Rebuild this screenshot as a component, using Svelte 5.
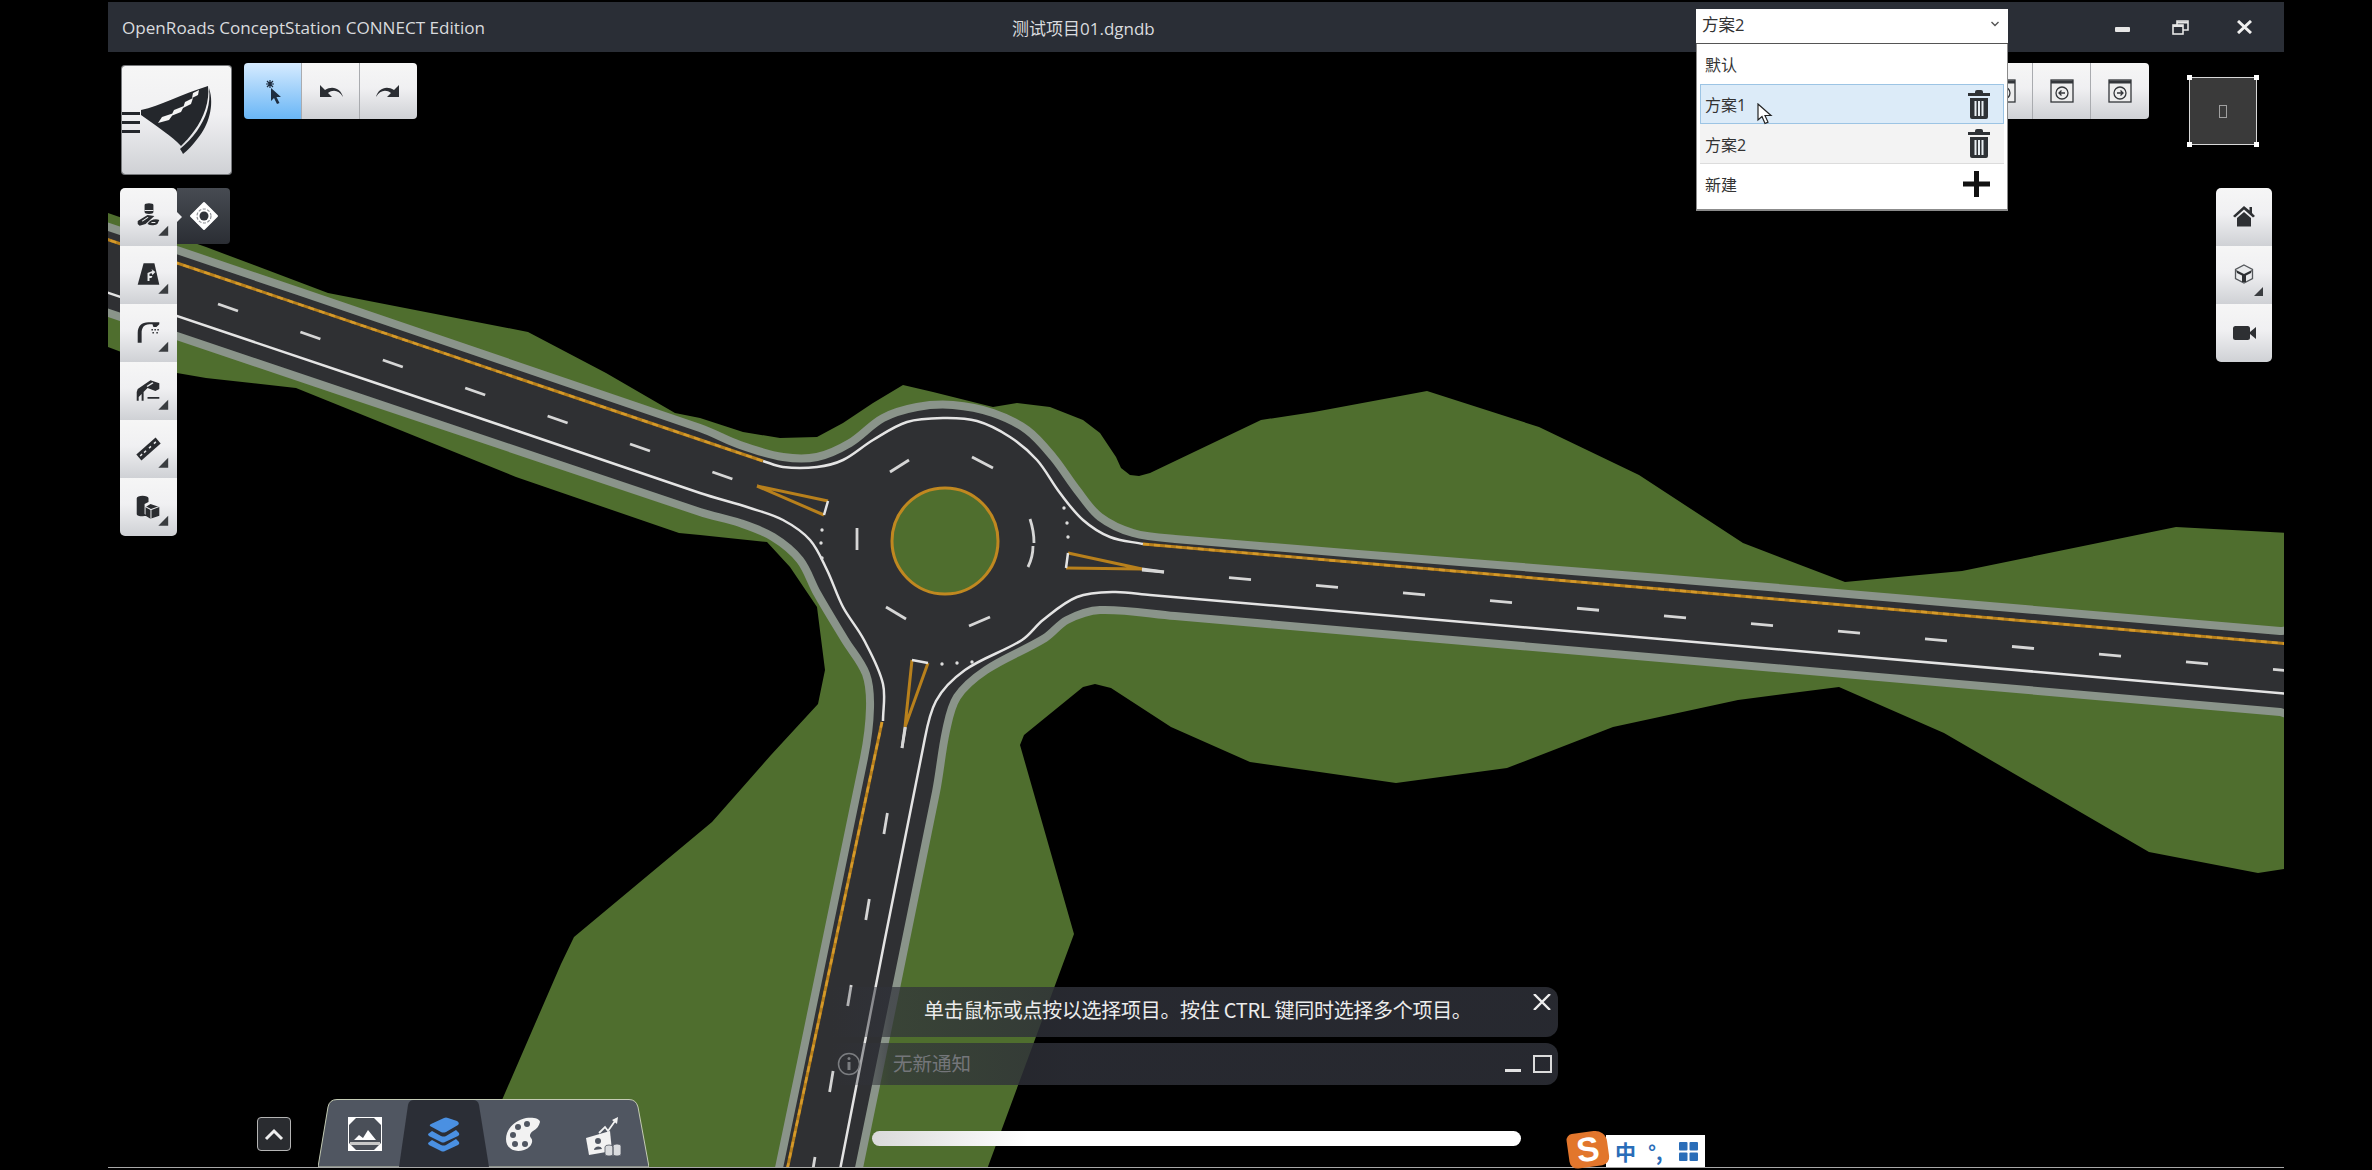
<script>
  // smooth path through points, tangents clamped so tight bends don't overshoot
  function smooth(pts, close = false) {
    const tan = pts.map((p, i) => {
      const a = pts[Math.max(i - 1, 0)];
      const b = pts[Math.min(i + 1, pts.length - 1)];
      const l = Math.hypot(b[0] - a[0], b[1] - a[1]) || 1;
      return [(b[0] - a[0]) / l, (b[1] - a[1]) / l];
    });
    let d = `M${pts[0][0]} ${pts[0][1]}`;
    for (let i = 1; i < pts.length; i++) {
      const p = pts[i - 1];
      const q = pts[i];
      const k = Math.hypot(q[0] - p[0], q[1] - p[1]) / 3;
      const c1 = [p[0] + tan[i - 1][0] * k, p[1] + tan[i - 1][1] * k];
      const c2 = [q[0] - tan[i][0] * k, q[1] - tan[i][1] * k];
      d += `C${c1[0].toFixed(1)} ${c1[1].toFixed(1)} ${c2[0].toFixed(1)} ${c2[1].toFixed(1)} ${q[0]} ${q[1]}`;
    }
    return close ? d + 'Z' : d;
  }

  const grass = [
    [100,210],[108,213],[206,247],[328,293],[528,332],[606,373],[675,413],[700,418],[743,432],[780,438],[817,437],[843,423],[873,403],[903,385],[933,392],[973,402],[993,407],[1017,403],[1050,407],[1083,420],[1100,433],[1116,457],[1121,468],[1130,475],[1139,476],[1150,473],[1261,420],[1314,412],[1427,391],[1539,427],[1639,475],[1743,543],[1845,582],[1962,571],[2176,527],[2290,533],
    [2290,868],[2258,873],[2149,852],[1944,733],[1839,687],[1738,700],[1613,727],[1507,768],[1396,783],[1271,765],[1250,762],[1171,727],[1111,688],[1095,684],[1083,687],[1024,735],[1020,745],[1074,934],[986,1172],[470,1172],[502,1100],[561,964],[574,937],[712,822],[771,755],[818,704],[825,670],[817,607],[790,567],[767,542],[700,535],[679,533],[516,477],[296,388],[206,378],[177,373],[108,347],[100,344]
  ].map((p) => p.join(',')).join(' ');

  const pavement = smooth([
    [100,224],[700,428],[740,445],[783,457],[817,457],[850,443],[883,418],[917,407],[953,405],[993,413],[1027,430],[1053,457],[1077,490],[1100,517],[1133,533],[1175,539],[1660,578],[2280,631],[2290,632],
    [2290,713],[2280,712],[1660,658],[1175,616],[1100,610],[1067,620],[1045,638],[986,670],[957,697],[946,731],[936,792],[859,1168],[858,1175],[778,1175],[779,1168],[864,758],[870,708],[866,674],[845,640],[817,593],[800,560],[773,537],[740,523],[700,512],[100,310]
  ], true);

  const edges = [
    smooth([[763,461],[783,467],[817,467],[843,460],[873,440],[907,422],[943,418],[977,421],[1010,437],[1037,460],[1060,493],[1083,520],[1110,537],[1143,544]]),
    smooth([[100,290],[500,425],[700,493],[750,508],[783,520],[810,540],[827,570],[843,607],[864,640],[883,684],[883,721]]),
    smooth([[2290,694],[1660,639],[1150,595],[1114,592],[1077,597],[1043,620],[1022,640],[965,670],[936,701],[923,748],[839,1175]])
  ];
  const centerlines = ['M100 237L763 461', 'M1143 544L1660 589L2290 644', 'M882 722L786 1175'];

  const westDashes = Array.from({ length: 7 }, (_, i) => [218 + i * 82.4, 304 + i * 28, 20, 7]);
  const eastDashes = Array.from({ length: 14 }, (_, i) => [1142 + i * 87, 570 + i * 7.65, 22, 2]);
  const southDashes = Array.from({ length: 6 }, (_, i) => [902 - i * 18.1, 748 + i * 86, 3.5, -21]);

  const ringMarks = [
    'M890 472L909 460', 'M972 457L993 468', 'M1030 519Q1034 531 1034 543', 'M1033 546Q1033 557 1028 567',
    'M857 528L857 550', 'M886 607L906 619', 'M969 626L990 617'
  ];
  const stops = [[822,530],[821,543],[822,558],[1064,508],[1067,523],[1068,537],[942,664],[957,663],[972,662]];

  const rail = [
    { ink: 'M24 17a4.500 2 0 0 1 9 0v7a4.500 2 0 0 1-9 0zM17 33l10-6 7 1-9 8-6 2-2-2zM27 36c2-4 8-6 12-4l-2 4c-4 2-7 2-10 0z', cut: 'M21 33l6-4 1 .6-6 4zM31 34h4v1h-4zM24 22h9v1h-9z' },
    { ink: 'M23 17h11l5 22H17z', cut: 'M27 35v-8l5-2-1-2 4 3-3 3-1-2-2 1v2h3l-1 2h-2v3z' },
    { ink: 'M17 39V29c0-7 4-11 11-11h11v2l-3 3h-3l-1-3h-3c-6 0-8 4-8 9v10zM31 25h1.500v1.500H31zM34 25h1.500v1.500H34zM37 25h1.500v1.500H37zM32 28h1.500v1.500H32zM36 28h1.500v1.500H36z', cut: '' },
    { ink: 'M17 27l13-9 9 3v6l-4 2-8-3-4 4v9h-2v-7l-3 3v4h-2v-9zM27 35h12v2H27z', cut: 'M26 24l6-4 1 1-6 4z' },
    { ink: 'M40.400 23.400L35.200 17.400 15.600 34.600 20.800 40.600z', cut: 'M33 23l2-1.800 1 1.200-2 1.800zM28 27.500l2-1.800 1 1.200-2 1.800zM23 32l2-1.800 1 1.200-2 1.800zM19 35.500l2-1.800 1 1.200-2 1.800z' },
    { ink: 'M16 20a6 2.500 0 0 1 12 0v4l-4 2v10l2 2c-5 1-10 0-10-2zM30 26l9 3v9l-9 3-5-3v-9z', cut: 'M30 32v9h1v-9l8-3-.6-.8-7.900 2.800-5.300-2.800-.7.800z' }
  ];

  const plans = [
    { name: '默认', kind: 'plain', icon: '' },
    { name: '方案1', kind: 'hover', icon: 'trash' },
    { name: '方案2', kind: 'current', icon: 'trash' },
    { name: '新建', kind: 'plain', icon: 'plus' }
  ];
</script>

<div class="app">
  <header class="titlebar">
    <span class="app-name">OpenRoads ConceptStation CONNECT Edition</span>
    <span class="doc-name">测试项目01.dgndb</span>
    <div class="win-ctrls">
      <svg width="15" height="6" viewBox="0 0 15 6" class="win-min"><rect width="15" height="5" rx="1" fill="#e6e6e6" /></svg>
      <svg width="17" height="15" viewBox="0 0 17 15" fill="none" stroke="#e6e6e6" stroke-width="1.600">
        <rect x="1" y="5" width="10" height="9" /><path d="M5 5V1h11v9h-5" /><path d="M5 2.500h11" stroke-width="2" /><path d="M1 6h10" stroke-width="2" />
      </svg>
      <svg class="win-close" width="15" height="14" viewBox="0 0 15 14" stroke="#f0f0f0" stroke-width="3"><path d="M1 1l13 12M14 1L1 13" /></svg>
    </div>

    <div class="picker">
      <div class="picker-head">
        <span>方案2</span>
        <svg width="8" height="6" viewBox="0 0 8 6" fill="none" stroke="#555" stroke-width="1.400"><path d="M.5 1l3.500 3.500L7.500 1" /></svg>
      </div>
      <ul class="picker-list">
        {#each plans as plan}
          <li class="plan {plan.kind}">
            <span>{plan.name}</span>
            {#if plan.icon === 'trash'}
              <svg width="22" height="29" viewBox="0 0 22 29" fill="#2e3236">
                <path d="M7 2q0-2 2-2h4q2 0 2 2v1h7v3H0V3h7zM2 8h18v19q0 2-2 2H4q-2 0-2-2z" />
                <path d="M6.500 11h2v15h-2zM10 11h2v15h-2zM13.500 11h2v15h-2z" fill="#e8eef2" />
              </svg>
            {:else if plan.icon === 'plus'}
              <svg width="27" height="26" viewBox="0 0 27 26" fill="#111"><path d="M11 0h5v10.500h11v5H16V26h-5V15.500H0v-5h11z" /></svg>
            {/if}
          </li>
        {/each}
      </ul>
      <svg class="pointer" width="16" height="22" viewBox="0 0 16 22"><path d="M1 1v16l4-3.500 3 7 3-1.400-3-6.600h6z" fill="#fff" stroke="#222" stroke-width="1.200" /></svg>
    </div>
  </header>

  <main class="viewport">
    <svg class="scene" viewBox="108 52 2176 1115" width="2176" height="1115">
      <polygon points={grass} fill="#4f6e2e" />
      <path d={pavement} fill="#2f3033" stroke="#8a948a" stroke-width="8" stroke-linejoin="round" />
      <circle cx="945" cy="541" r="53" fill="#4f6e2e" stroke="#c08820" stroke-width="3" />
      {#each edges as d}
        <path {d} class="edge" />
      {/each}
      {#each centerlines as d}
        <path {d} class="yellow" />
        <path {d} class="yellow-dash" />
      {/each}
      {#each [...westDashes, ...eastDashes, ...southDashes] as [x, y, dx, dy]}
        <path d="M{x} {y}l{dx} {dy}" class="dash" />
      {/each}
      {#each ringMarks as d}
        <path {d} class="dash" />
      {/each}
      {#each stops as [cx, cy]}
        <circle {cx} {cy} r="1.700" fill="#ddd" />
      {/each}
      <path d="M757 486L828 501M757 486L824 515M1142 569L1068 553M1142 569L1066 568M912 660L905 727M928 663L905 727" class="yellow" />
      <path d="M828 501L824 515M1068 553L1066 568M912 660L928 663" class="edge" />
      <path d="M1142 569L1164 572M905 727L902 748" class="dash" />
    </svg>

    <button class="logo tool" aria-label="home">
      <svg width="109" height="108" viewBox="0 0 109 108" fill="#24272c">
        <path d="M0 46h18v3H0zM0 55h18v3H0zM0 64h18v3H0z" />
        <path d="M19 44C38 40 60 28 86 20 88 34 82 52 72 65 67 72 63 76 59 80 50 70 34 60 19 49Z" />
        <path d="M87 22C93 40 86 60 76 72 70 80 66 84 61 88 60 86 59 84 58 83 64 78 70 72 75 65 84 52 89 38 87 22Z" />
        <path d="M71 27l6-3-1 5-6 3zM63 36l8-4-2 6-8 4zM52 44l10-4-3 6-10 4zM40 51l12-4-5 7-11 3z" fill="#f4f4f4" />
      </svg>
    </button>

    <div class="select-tools">
      <button class="tool active" aria-label="select">
        <svg width="57" height="56" viewBox="0 0 57 56" fill="#1d2c3f">
          <path d="M27 25v13l3-3 3 6 2.500-1-3-6h4.500z" />
          <path d="M26 17v8M22 21h8M23 18l6 6M29 18l-6 6" stroke="#1d2c3f" stroke-width="1.200" />
        </svg>
      </button>
      <button class="tool" aria-label="undo">
        <svg width="57" height="56" viewBox="0 0 57 56" fill="#2b2e33"><path d="M18 22v12h12l-4-4c5-4 11-3 15 4-2-8-10-12-18-7z" /></svg>
      </button>
      <button class="tool" aria-label="redo">
        <svg class="flip" width="57" height="56" viewBox="0 0 57 56" fill="#2b2e33"><path d="M18 22v12h12l-4-4c5-4 11-3 15 4-2-8-10-12-18-7z" /></svg>
      </button>
    </div>

    <div class="flyout">
      <svg width="32" height="32" viewBox="0 0 32 32">
        <path d="M16 3L29 16 16 29 3 16Z" fill="#fff" stroke="#fff" stroke-width="2" stroke-linejoin="round" />
        <circle cx="16" cy="16" r="10" fill="#fff" />
        <circle cx="16" cy="16" r="7" fill="none" stroke="#8f9297" stroke-width="1.200" stroke-dasharray="3 1.500" />
        <circle cx="16" cy="16" r="4.500" fill="#30333a" />
      </svg>
    </div>

    <nav class="rail left-rail">
      {#each rail as icon}
        <button class="tool" aria-label="tool">
          <svg width="56" height="58" viewBox="0 0 57 58">
            <path d={icon.ink} fill="#2a2c30" />
            {#if icon.cut}<path d={icon.cut} fill="#e9eaec" />{/if}
            <path d="M38 48h10V38z" fill="#3a3d40" />
          </svg>
        </button>
      {/each}
    </nav>

    <div class="panel-tools">
      {#each [0, 1, 2] as n}
        <button class="tool" aria-label="panel">
          <svg width="24" height="24" viewBox="0 0 24 24" fill="none" stroke="#33363a" stroke-width="1.300">
            <rect x="1" y="1" width="22" height="22" fill="#eee" />
            <path d="M1 3h22" stroke-width="3" />
            <circle cx="12" cy="14" r="6" />
            {#if n === 1}<path d="M15 14H9M11.500 11.500L9 14l2.500 2.500" />{:else}<path d="M9 14h6M12.500 11.500L15 14l-2.500 2.500" />{/if}
          </svg>
        </button>
      {/each}
    </div>

    <div class="navcube">
      <i class="h tl"></i><i class="h tr"></i><i class="h bl"></i><i class="h br"></i>
      <span class="tofu"></span>
    </div>

    <nav class="rail right-rail">
      <button class="tool" aria-label="home view">
        <svg width="56" height="58" viewBox="0 0 56 58" fill="#2e3033"><path d="M28 18l-11 10 2 1.500 9-8 9 8 2-1.500-3-3v-6h-2.500v3.500z" /><path d="M21 30l7-6 7 6v8.500H21z" /></svg>
      </button>
      <button class="tool" aria-label="view cube">
        <svg width="56" height="58" viewBox="0 0 56 58">
          <path d="M28 19l8.500 4.500v9L28 37l-8.500-4.500v-9z" fill="#e9eaec" stroke="#55585c" stroke-width="1.300" />
          <path d="M20 24l8 4 8-4-1 3-5 2.500V36h-4v-6.500L21 27z" fill="#2e3033" />
          <path d="M38 50h9V41z" fill="#3a3d40" />
        </svg>
      </button>
      <button class="tool" aria-label="camera">
        <svg width="56" height="58" viewBox="0 0 56 58" fill="#2e3033"><rect x="17" y="22" width="17" height="14" rx="2.500" /><path d="M34 28l6-5v12l-6-5z" /></svg>
      </button>
    </nav>

    <button class="up" aria-label="expand">
      <svg width="20" height="13" viewBox="0 0 20 13" fill="none" stroke="#eee" stroke-width="3"><path d="M2 11l8-8 8 8" /></svg>
    </button>

    <div class="tabs">
      <svg class="tabs-bg" width="331" height="68" viewBox="0 0 331 68">
        <path d="M0 68L10 8Q11.500 .5 19 .5H311Q318 .5 320 8L331 68Z" fill="#505661" stroke="#c4cbb4" />
        <path d="M81 68L90 6Q91 1 96 1H155Q160 1 161 6L171 68Z" fill="#2b2e36" />
      </svg>
      <svg width="34" height="34" viewBox="0 0 34 34">
        <rect width="34" height="34" fill="#fff" />
        <path d="M8 1h18l7 7v18l-7 7H8l-7-7V8z" fill="#4a4f58" />
        <path d="M6 23l5-5 4 3 5-8 8 10z" fill="#fff" />
        <path d="M2 25h30v3H2z" fill="#c8c8c8" />
      </svg>
      <svg width="34" height="36" viewBox="0 0 34 36" fill="#4a90e2">
        <path d="M3 9q-1-1 1-2L17 1q2-1 4 0l9 3q3 2 1 4L19 15q-3 1-5 0z" />
        <path d="M1 17l4-3 9 5q3 1 5 0l10-6 3 3q1 2-1 3L18 25q-2 1-4 0L2 19q-1-1-1-2z" />
        <path d="M1 26l4-3 9 5q3 1 5 0l10-6 3 3q1 2-1 3L18 34q-2 1-4 0L2 28q-1-1-1-2z" />
      </svg>
      <svg width="34" height="36" viewBox="0 0 34 36">
        <path d="M34 5c-1 4-3 7-7 9-3 2-4 5-2 7 3 3 0 10-7 12C9 36 0 32 0 22 0 11 10 3 20 1c6-1 14 0 14 4z" fill="#f2f2f2" />
        <circle cx="21" cy="7" r="3" fill="#505661" /><circle cx="12" cy="10" r="3" fill="#505661" />
        <circle cx="7" cy="18" r="3" fill="#505661" /><circle cx="9" cy="27" r="3" fill="#505661" /><circle cx="19" cy="27" r="3" fill="#505661" />
      </svg>
      <svg width="36" height="40" viewBox="0 0 36 40">
        <path d="M14 16l6-6 3 4 7-10" fill="none" stroke="#f2f2f2" stroke-width="1.800" />
        <path d="M33 0l-1 7-5-4z" fill="#f2f2f2" />
        <path d="M1 21l24-7 2 20-23 4z" fill="#f2f2f2" />
        <circle cx="13" cy="24" r="3" fill="#505661" /><path d="M9 33c0-4 7-5 8-1z" fill="#505661" />
        <path d="M20 30a4 2 0 0 1 8 0v7a4 2 0 0 1-8 0zM28 29a4 2 0 0 1 8 0v8a4 2 0 0 1-8 0z" fill="#d9dbde" stroke="#505661" stroke-width=".8" />
      </svg>
    </div>

    <section class="notices">
      <div class="notice msg">
        <span>单击鼠标或点按以选择项目。按住 CTRL 键同时选择多个项目。</span>
        <svg width="18" height="16" viewBox="0 0 18 16" stroke="#eee" stroke-width="2.400"><path d="M1 0l16 16M17 0L1 16" /></svg>
      </div>
      <div class="notice status">
        <svg width="24" height="24" viewBox="0 0 24 24" fill="none" stroke="#7b7d80" stroke-width="1.500"><circle cx="12" cy="12" r="10.500" /><path d="M12 10v8" stroke-width="3" /><circle cx="12" cy="6.500" r="1.500" fill="#7b7d80" stroke="none" /></svg>
        <span>无新通知</span>
        <svg class="min" width="16" height="16" viewBox="0 0 16 16"><rect y="13" width="16" height="3" fill="#e2e2e2" /></svg>
        <svg width="19" height="18" viewBox="0 0 19 18" fill="none" stroke="#dcdcdc" stroke-width="2"><rect x="1" y="1" width="17" height="16" /></svg>
      </div>
    </section>

    <div class="home-pill"></div>

    <div class="ime">
      <span class="ime-s">S</span>
      <div class="ime-bar">
        <span class="zh">中</span>
        <span class="punct">°,</span>
        <svg width="19" height="19" viewBox="0 0 19 19" fill="#2a6db8"><rect width="8.500" height="8.500" rx="1" /><rect x="10.500" width="8.500" height="8.500" rx="1" /><rect y="10.500" width="8.500" height="8.500" rx="1" /><rect x="10.500" y="10.500" width="8.500" height="8.500" rx="1" /></svg>
      </div>
    </div>
  </main>

  <div class="baseline"></div>
</div>

<style>
  :global(body) {
    background: #000;
  }
  .app {
    width: 2176px;
    height: 1170px;
    margin-left: 108px;
    display: flex;
    flex-direction: column;
    font-family: "Open Sans", "Noto Sans CJK SC", sans-serif;
    overflow: hidden;
  }

  /* title bar */
  .titlebar {
    position: relative;
    z-index: 2;
    flex: none;
    height: 50px;
    margin-top: 2px;
    display: flex;
    align-items: center;
    background: #2a2e36;
    color: #d9dbde;
    font-size: 17.100px;
  }
  .app-name {
    width: 890px;
    padding-left: 14px;
    box-sizing: content-box;
    white-space: nowrap;
  }
  .doc-name {
    font-size: 17px;
  }
  .win-ctrls {
    margin-left: auto;
    padding-right: 32px;
    display: flex;
    align-items: center;
    gap: 42px;
  }
  .win-min {
    margin-top: 5px;
  }
  .win-close {
    margin-left: 6px;
  }

  /* scheme dropdown */
  .picker {
    position: absolute;
    left: 1588px;
    top: 7px;
    width: 312px;
    color: #333;
    font-size: 16.500px;
  }
  .picker-head {
    height: 35px;
    box-sizing: border-box;
    padding: 0 9px 4px 6px;
    display: flex;
    justify-content: space-between;
    align-items: center;
    background: #fff;
    border-bottom: 1px solid #555;
  }
  .picker-list {
    list-style: none;
    margin: 0;
    height: 167px;
    padding: 0 3px;
    box-sizing: border-box;
    background: #fff;
    border: 1px solid #8b8b8b;
    border-top: none;
    border-bottom-width: 2px;
    display: flex;
    flex-direction: column;
    font-size: 16px;
  }
  .plan {
    flex: none;
    height: 40px;
    padding: 0 14px 0 5px;
    display: flex;
    justify-content: space-between;
    align-items: center;
    box-sizing: border-box;
  }
  .plan.hover {
    background: #dcebf8;
    border: 1px solid #9cc4e4;
    padding-right: 13px;
    padding-left: 4px;
  }
  .plan.current {
    background: #f3f3f3;
    border-bottom: 1px solid #dcdcdc;
  }
  .pointer {
    position: absolute;
    left: 61px;
    top: 94px;
  }

  /* viewport */
  .viewport {
    position: relative;
    flex: none;
    height: 1115px;
    background: #000;
  }
  .scene {
    display: block;
  }
  .edge {
    fill: none;
    stroke: #e4e4e4;
    stroke-width: 2.500;
  }
  .yellow {
    fill: none;
    stroke: #b8801c;
    stroke-width: 3;
  }
  .yellow-dash {
    fill: none;
    stroke: #d69a2a;
    stroke-width: 2.400;
    stroke-dasharray: 6 5;
  }
  .dash {
    fill: none;
    stroke: #d6d6d6;
    stroke-width: 2.800;
  }
  .baseline {
    flex: none;
    height: 1px;
    background: #a8a8a8;
  }

  /* buttons that float over the viewport */
  .tool {
    display: flex;
    align-items: center;
    justify-content: center;
    margin: 0;
    padding: 0;
    border: none;
    background: linear-gradient(#f6f6f6, #f0f0f2 45%, #cfd1d5);
  }
  .logo {
    position: absolute;
    left: 14px;
    top: 14px;
    width: 109px;
    height: 108px;
    border-radius: 3px;
    box-shadow: 0 0 0 1px #77797c;
  }
  .select-tools {
    position: absolute;
    left: 136px;
    top: 11px;
    display: flex;
    border-radius: 4px;
    overflow: hidden;
  }
  .select-tools .tool {
    width: 58px;
    height: 56px;
    border-right: 1px solid #a9abaf;
  }
  .select-tools .tool:last-child {
    width: 57px;
    border-right: none;
  }
  .select-tools .active {
    background: linear-gradient(#d6ebff, #9fd0fa 50%, #69b6f6);
  }
  .flip {
    transform: scaleX(-1);
  }
  .flyout {
    position: absolute;
    left: 69px;
    top: 136px;
    width: 53px;
    height: 56px;
    display: flex;
    align-items: center;
    justify-content: center;
    border-radius: 0 4px 4px 0;
    background: linear-gradient(#474b52, #2b2e34);
  }
  .flyout::before {
    content: "";
    position: absolute;
    left: 0;
    top: 24px;
    border-left: 5px solid #f0f0f2;
    border-top: 5px solid transparent;
    border-bottom: 5px solid transparent;
  }
  .rail {
    position: absolute;
    top: 136px;
    display: flex;
    flex-direction: column;
    border-radius: 5px;
    overflow: hidden;
  }
  .left-rail {
    left: 12px;
    width: 57px;
  }
  .left-rail .tool {
    height: 58px;
    width: 57px;
  }
  .right-rail {
    left: 2108px;
    width: 56px;
  }
  .right-rail .tool {
    height: 58px;
    width: 56px;
  }
  .panel-tools {
    position: absolute;
    left: 1867px;
    top: 11px;
    display: flex;
    border-radius: 4px;
    overflow: hidden;
  }
  .panel-tools .tool {
    width: 58px;
    height: 56px;
    border-right: 1px solid #a9abaf;
  }
  .panel-tools .tool:last-child {
    border-right: none;
  }
  .navcube {
    position: absolute;
    left: 2081px;
    top: 25px;
    width: 68px;
    height: 68px;
    box-sizing: border-box;
    display: flex;
    align-items: center;
    justify-content: center;
    background: #3a3a3a;
    border: 1.500px solid #d8d8d8;
  }
  .h {
    position: absolute;
    width: 5px;
    height: 5px;
    background: #fff;
  }
  .tl { left: -3px; top: -3px; }
  .tr { right: -3px; top: -3px; }
  .bl { left: -3px; bottom: -3px; }
  .br { right: -3px; bottom: -3px; }
  .tofu {
    width: 8px;
    height: 13px;
    box-sizing: border-box;
    border: 1px solid #a0a0a0;
  }

  /* bottom strip */
  .up {
    position: absolute;
    left: 149px;
    top: 1065px;
    width: 34px;
    height: 34px;
    padding: 0;
    display: flex;
    align-items: center;
    justify-content: center;
    background: #2a2c30;
    border: 1px solid #b4b4b4;
    border-radius: 4px;
  }
  .tabs {
    position: absolute;
    left: 210px;
    top: 1047px;
    width: 331px;
    height: 68px;
    box-sizing: border-box;
    padding: 18px 0 0 30px;
    display: flex;
    align-items: flex-start;
    gap: 45px;
  }
  .tabs > svg {
    position: relative;
  }
  .tabs .tabs-bg {
    position: absolute;
    left: 0;
    top: 0;
  }
  .notices {
    position: absolute;
    left: 722px;
    top: 935px;
    width: 728px;
    display: flex;
    flex-direction: column;
    gap: 6px;
    font-family: "Noto Sans CJK SC", sans-serif;
  }
  .notice {
    display: flex;
    align-items: center;
    border-radius: 0 12px 12px 0;
    background: linear-gradient(90deg, rgba(48, 50, 58, 0) 0, rgba(48, 50, 58, 0.7) 60px, rgba(46, 48, 56, 0.85) 240px);
  }
  .msg {
    height: 50px;
    padding: 0 7px 0 94px;
    justify-content: space-between;
    color: #ececec;
    font-size: 20px;
    letter-spacing: -0.300px;
  }
  .msg span {
    margin-top: -5px;
  }
  .msg svg {
    margin-top: -20px;
  }
  .status {
    height: 42px;
    padding: 0 6px 0 7px;
    color: #74767a;
    font-size: 19.500px;
  }
  .status span {
    margin-left: 32px;
    margin-top: -3px;
  }
  .status .min {
    margin-left: auto;
    margin-right: 12px;
  }
  .home-pill {
    position: absolute;
    left: 764px;
    top: 1079px;
    width: 649px;
    height: 15px;
    border-radius: 8px;
    background: linear-gradient(90deg, #dadada, #fff 24%);
  }
  .ime {
    position: absolute;
    left: 1460px;
    top: 1080px;
    height: 35px;
    display: flex;
    align-items: flex-end;
  }
  .ime-s {
    position: relative;
    z-index: 1;
    width: 40px;
    height: 35px;
    display: flex;
    align-items: center;
    justify-content: center;
    background: #e2762c;
    border-radius: 6px 12px 8px 8px;
    transform: rotate(-8deg);
    color: #fff;
    font-family: "Liberation Sans", sans-serif;
    font-weight: bold;
    font-size: 34px;
  }
  .ime-bar {
    width: 99px;
    height: 32px;
    margin-left: -2px;
    padding-left: 9px;
    box-sizing: border-box;
    display: flex;
    align-items: center;
    background: #fff;
    color: #2a6db8;
    font-family: "Noto Sans CJK SC", sans-serif;
    font-weight: bold;
  }
  .zh {
    width: 33px;
    font-size: 21px;
  }
  .punct {
    width: 31px;
    font-size: 20px;
  }
</style>
